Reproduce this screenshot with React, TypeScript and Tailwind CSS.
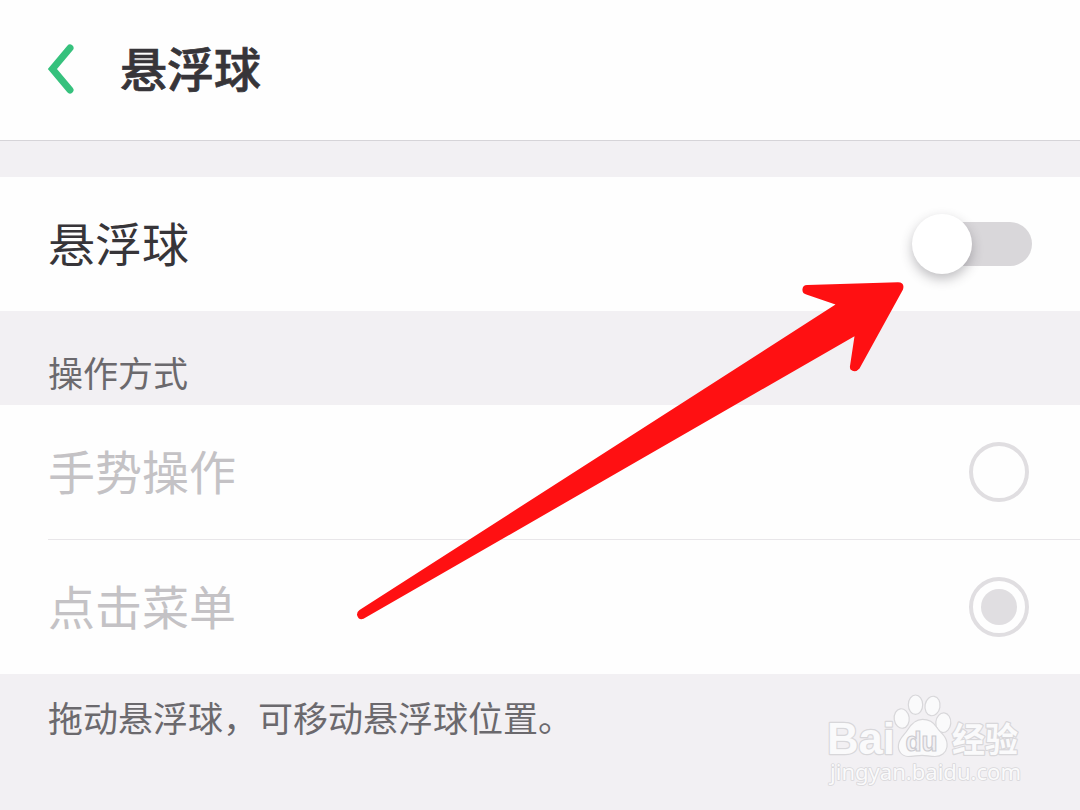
const options = [
  { label: "手势操作", selected: false },
  { label: "点击菜单", selected: true },
]

function BackIcon() {
  return (
    <svg className="mb-0.5 h-[50px] w-[28px]" viewBox="0 0 28 50" fill="none">
      <path
        d="M23 4L5.400 24.900L23 46"
        stroke="#36c17d"
        strokeWidth="7"
        strokeLinecap="round"
        strokeLinejoin="miter"
      />
    </svg>
  )
}

function Toggle() {
  return (
    <button className="relative flex h-[60px] w-[120px] items-center justify-end" aria-label="悬浮球">
      <span className="h-11 w-[98px] rounded-full bg-[#d9d7da]" />
      <span className="absolute top-0 left-0 size-[60px] rounded-full bg-white shadow-[0_5px_12px_rgba(60,55,65,0.32)]" />
    </button>
  )
}

function Radio({ selected }: { selected: boolean }) {
  return (
    <span className="flex size-[60px] items-center justify-center rounded-full border-4 border-[#e0dee1]">
      {selected && <span className="size-9 rounded-full bg-[#e0dee1]" />}
    </span>
  )
}

function Arrow() {
  return (
    <svg className="pointer-events-none absolute top-0 left-0" width="1080" height="810" viewBox="0 0 1080 810">
      <path
        d="M359.500 610L835.500 304.500L806.300 294.400A4.800 4.800 0 0 1 807.500 284.900L898 282.300Q905 282.500 903 289.500L859.500 368.500Q855 373.500 850.500 369.500Q849.700 368 850 366L854.500 336.300L363.500 618.800Q358.500 620.500 357 615Q356.800 611.800 359.500 610Z"
        fill="#ff1012"
      />
    </svg>
  )
}

function Watermark() {
  return (
    <svg
      className="pointer-events-none absolute top-[690px] left-[820px]"
      width="220"
      height="100"
      viewBox="0 0 220 100"
      fill="#fafafb"
      stroke="#d8d7da"
      strokeWidth="1.2"
    >
      <g paintOrder="stroke" strokeWidth="2.4" strokeLinejoin="round">
        <text
          x="7"
          y="63.500"
          fontSize="44"
          fontWeight="700"
          textLength="68"
          lengthAdjust="spacingAndGlyphs"
          className="font-['Liberation_Sans',sans-serif]"
        >
          Bai
        </text>
        <text
          x="132"
          y="61.500"
          fontSize="34"
          fontWeight="700"
          textLength="66"
          lengthAdjust="spacingAndGlyphs"
          className="font-['Noto_Sans_CJK_SC',sans-serif]"
        >
          经验
        </text>
        <text
          x="10"
          y="90"
          fontSize="22"
          textLength="191"
          lengthAdjust="spacingAndGlyphs"
          strokeWidth="1.6"
          className="font-['Noto_Sans',sans-serif]"
        >
          jingyan.baidu.com
        </text>
      </g>
      <ellipse cx="81.700" cy="28.500" rx="7.500" ry="9.800" transform="rotate(-8 81.700 28.500)" />
      <ellipse cx="95.500" cy="14.700" rx="7.200" ry="9.700" />
      <ellipse cx="112.500" cy="16" rx="7.500" ry="9.800" transform="rotate(10 112.500 16)" />
      <ellipse cx="123.300" cy="32.700" rx="7.500" ry="9.800" transform="rotate(5 123.300 32.700)" />
      <path d="M102.500 29.300C109 29.300 113.500 32 116.500 37C119 41 122 43 124.500 46.500C126.500 49.500 127.500 53 127 57C126 63 121 66.500 115 66.500C110 66.500 106 65.300 102 65.300C98 65.300 93 66.500 88 66.500C81.500 66 77.500 61 78.500 54.500C79.500 48 84.500 45 87.500 40C91 34 95 29.300 102.500 29.300Z" />
      <text
        x="85.500"
        y="60.500"
        fontSize="28"
        textLength="32"
        lengthAdjust="spacingAndGlyphs"
        fontWeight="700"
        fill="#f2f1f4"
        stroke="#cccbd0"
        className="font-['Liberation_Sans',sans-serif]"
      >
        du
      </text>
    </svg>
  )
}

export default function App() {
  return (
    <div className="relative h-[810px] w-[1080px] overflow-hidden bg-[#f2f0f3] font-['Noto_Sans_CJK_SC',sans-serif] text-[47px] leading-none text-[#373539]">
      <header className="flex h-[141px] items-center border-b border-[#d6d4d8] bg-[#fefefe] pl-[47px]">
        <BackIcon />
        <h1 className="mb-[7px] ml-[45px] font-medium [-webkit-text-stroke:0.7px_#373539]">悬浮球</h1>
      </header>

      <main className="pt-9">
        <div className="flex h-[134px] items-center justify-between bg-[#fefefe] px-12">
          <span className="mb-[5px]">悬浮球</span>
          <Toggle />
        </div>

        <h2 className="flex h-[94px] items-end pb-4 pl-12 text-[35px] text-[#6b696d]">操作方式</h2>

        <div className="bg-[#fefefe] pl-12 text-[#c4c2c5]">
          {options.map((option) => (
            <div
              key={option.label}
              className="flex h-[135px] items-center justify-between border-b border-[#e8e6e9] pr-[51px] last:h-[134px] last:border-b-0"
            >
              <span className="mb-[5px]">{option.label}</span>
              <Radio selected={option.selected} />
            </div>
          ))}
        </div>

        <p className="pt-[25px] pl-12 text-[35px] text-[#6b696d]">拖动悬浮球，可移动悬浮球位置。</p>
      </main>

      <Watermark />
      <Arrow />
    </div>
  )
}
